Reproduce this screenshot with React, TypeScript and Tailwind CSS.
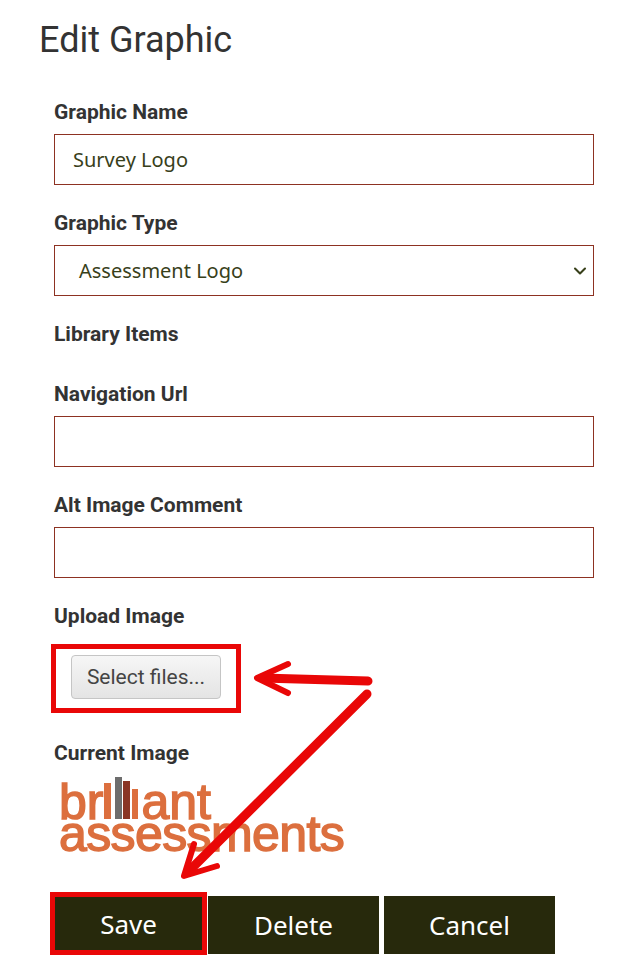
import { ChevronDown } from 'lucide-react';

function Label({ children }: { children: React.ReactNode }) {
  return <div className="h-6 text-[21px] leading-6 font-bold text-[#333]">{children}</div>;
}

function Logo() {
  return (
    <div className="h-[80px] w-[300px] blur-[0.7px] font-['Liberation_Sans',sans-serif] text-[#dc6f3e] [-webkit-text-stroke:1.5px_#dc6f3e]">
      <div className="flex items-baseline pl-[5px] pt-[2px] text-[50px] leading-[36px]">
        <span>br</span>
        <div className="ml-[1px] h-[36px] w-[7px] bg-[#dc6f3e]" />
        <div className="ml-[4px] h-[42px] w-[7px] bg-[#6d6d6d]" />
        <div className="ml-[1px] h-[38px] w-[7px] bg-[#8a3525]" />
        <div className="ml-[2px] h-[30px] w-[6px] bg-[#dc6f3e]" />
        <span className="ml-[3px]">ant</span>
      </div>
      <div className="pl-[5px] text-[50px] leading-[28px] tracking-[-0.6px]">assessments</div>
    </div>
  );
}

export default function App() {
  return (
    <div className="relative min-h-[977px] w-[644px] bg-white font-['Roboto',sans-serif]">
      <div className="px-[39px] pt-[18px] text-[36px] leading-[44px] text-[#333]">Edit Graphic</div>

      <form className="pl-[54px] pt-[38px]">
        <Label>Graphic Name</Label>
        <div className="mt-[10px] flex h-[51px] w-[540px] items-center border border-[#8d3222] pl-[18px] pt-[1px] font-['Noto_Sans',sans-serif] text-[20px] text-[#38401a]">
          Survey Logo
        </div>

        <div className="mt-[26px]">
          <Label>Graphic Type</Label>
        </div>
        <div className="mt-[10px] flex h-[51px] w-[540px] items-center justify-between border border-[#8d3222] pl-[24px] pr-[3px] pt-[1px] font-['Noto_Sans',sans-serif] text-[20px] text-[#38401a]">
          Assessment Logo
          <ChevronDown size={20} strokeWidth={2.5} />
        </div>

        <div className="mt-[26px]">
          <Label>Library Items</Label>
        </div>

        <div className="mt-[36px]">
          <Label>Navigation Url</Label>
        </div>
        <div className="mt-[10px] h-[51px] w-[540px] border border-[#8d3222]" />

        <div className="mt-[26px]">
          <Label>Alt Image Comment</Label>
        </div>
        <div className="mt-[10px] h-[51px] w-[540px] border border-[#8d3222]" />

        <div className="mt-[26px]">
          <Label>Upload Image</Label>
        </div>
        <div className="-ml-[3px] mt-[16px] flex h-[69px] w-[190px] items-start border-[5px] border-[#e90707] pl-[15px] pt-[6px]">
          <div className="flex h-[44px] w-[150px] items-center justify-center rounded border border-[#c5c5c5] bg-gradient-to-b from-[#f6f6f6] to-[#e4e4e4] pt-[1px] text-[21px] text-[#444]">
            Select files...
          </div>
        </div>

        <div className="mt-[28px]">
          <Label>Current Image</Label>
        </div>
        <div className="mt-[10px]">
          <Logo />
        </div>

        <div className="-ml-[4px] mt-[37px] flex items-start font-['Noto_Sans',sans-serif] text-[26px] text-white">
          <div className="flex h-[63px] w-[157px] items-center justify-center border-[5px] border-[#e90707] bg-[#27290c] pt-[2px]">Save</div>
          <div className="ml-[1px] mt-[4px] flex h-[58px] w-[171px] items-center justify-center bg-[#27290c]">Delete</div>
          <div className="ml-[5px] mt-[4px] flex h-[58px] w-[171px] items-center justify-center bg-[#27290c]">Cancel</div>
        </div>
      </form>

      {/* annotation arrows */}
      <svg className="absolute left-0 top-0 pointer-events-none" width="644" height="977" fill="none" stroke="#e90707" strokeLinecap="round" strokeLinejoin="round">
        <path d="M368 681 L262 678" strokeWidth="9" />
        <path d="M288 664 L257 678 L288 693" strokeWidth="6" />
        <path d="M367 694 L190 870" strokeWidth="9" />
        <path d="M194 844 L184 876 L217 866" strokeWidth="6" />
      </svg>
    </div>
  );
}
